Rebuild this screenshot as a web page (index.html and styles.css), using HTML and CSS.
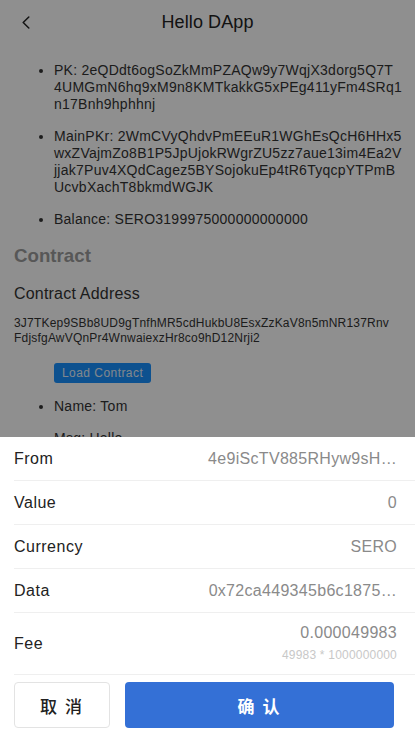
FILE: index.html
```html
<!DOCTYPE html>
<html lang="en">
<head>
<meta charset="utf-8">
<title>Hello DApp</title>
<link rel="stylesheet" href="styles.css">
</head>
<body>
<div class="page">
  <header class="topbar">
    <span class="back">
      <svg width="8" height="13" viewBox="0 0 8 13"><path d="M6.8 1 L1.2 6.5 L6.8 12" fill="none" stroke="#222" stroke-width="1.5" stroke-linecap="round" stroke-linejoin="round"/></svg>
    </span>
    <h1 class="title">Hello DApp</h1>
    <span class="spacer"></span>
  </header>
  <main class="content">
    <ul class="info">
      <li>PK: 2eQDdt6ogSoZkMmPZAQw9y7WqjX3dorg5Q7T<br>4UMGmN6hq9xM9n8KMTkakkG5xPEg411yFm4SRq1<br>n17Bnh9hphhnj</li>
      <li>MainPKr: 2WmCVyQhdvPmEEuR1WGhEsQcH6HHx5<br>wxZVajmZo8B1P5JpUjokRWgrZU5zz7aue13im4Ea2V<br>jjak7Puv4XQdCagez5BYSojokuEp4tR6TyqcpYTPmB<br>UcvbXachT8bkmdWGJK</li>
      <li>Balance: SERO3199975000000000000</li>
    </ul>
    <h3 class="section">Contract</h3>
    <div class="field-label">Contract Address</div>
    <div class="address">3J7TKep9SBb8UD9gTnfhMR5cdHukbU8EsxZzKaV8n5mNR137Rnv<br>FdjsfgAwVQnPr4WnwaiexzHr8co9hD12Nrji2</div>
    <button class="load">Load Contract</button>
    <ul class="info details">
      <li>Name: Tom</li>
      <li>Msg: Hello</li>
    </ul>
  </main>
</div>

<div class="mask"></div>

<section class="sheet">
  <div class="row"><span class="label">From</span><span class="value">4e9iScTV885RHyw9sH…</span></div>
  <div class="row"><span class="label">Value</span><span class="value">0</span></div>
  <div class="row"><span class="label">Currency</span><span class="value">SERO</span></div>
  <div class="row"><span class="label">Data</span><span class="value">0x72ca449345b6c1875…</span></div>
  <div class="row fee"><span class="label">Fee</span><span class="fee-values"><span class="value">0.000049983</span><span class="sub">49983 * 1000000000</span></span></div>
  <div class="actions">
    <button class="btn cancel">取 消</button>
    <button class="btn confirm">确 认</button>
  </div>
</section>
</body>
</html>
```

FILE: styles.css
```css
* { box-sizing: border-box; }

html, body {
  margin: 0;
  padding: 0;
  background: #fff;
  font-family: "Liberation Sans", Arial, "Noto Sans CJK SC", sans-serif;
  color: #333;
}

.page { min-height: 736px; }

.topbar {
  height: 44px;
  display: grid;
  grid-template-columns: 44px 1fr 44px;
  align-items: center;
}

.back {
  display: flex;
  align-items: center;
  justify-content: flex-start;
  padding-left: 22px;
  padding-top: 1px;
}

.title {
  margin: 0;
  text-align: center;
  font-size: 18px;
  font-weight: 400;
  color: #222;
  letter-spacing: 0.1px;
}

.content { padding: 0 14px; }

.info {
  margin: 18px 0 0;
  padding-left: 40px;
  font-size: 14px;
  line-height: 17px;
  letter-spacing: 0.25px;
  color: #333;
}

.info li {
  margin-bottom: 15px;
  white-space: nowrap;
}
.info li:last-child { margin-bottom: 0; }

.section {
  margin: 17px 0 0;
  font-size: 18.72px;
  line-height: 22px;
  font-weight: 700;
  color: #9c9c9c;
}

.field-label {
  margin-top: 17px;
  font-size: 16px;
  line-height: 20px;
  letter-spacing: 0.2px;
  color: #333;
}

.address {
  margin-top: 12px;
  font-size: 12px;
  line-height: 15px;
  letter-spacing: 0.2px;
  color: #333;
  white-space: nowrap;
}

.load {
  display: block;
  margin: 17px 0 0 40px;
  height: 20px;
  padding: 0 8px;
  border: 0;
  border-radius: 3px;
  background: #1890ff;
  color: #e6f0fb;
  font-family: inherit;
  font-size: 12px;
  letter-spacing: 0.45px;
}

.details { margin-top: 15px; }

.mask {
  position: fixed;
  inset: 0;
  background: rgba(0, 0, 0, 0.44);
}

.sheet {
  position: fixed;
  left: 0;
  right: 0;
  bottom: 0;
  height: 299px;
  background: #fff;
  display: flex;
  flex-direction: column;
}

.row {
  margin-left: 14px;
  padding-right: 18px;
  height: 44px;
  border-bottom: 1px solid #efefef;
  display: flex;
  align-items: center;
  justify-content: space-between;
}

.label {
  font-size: 16px;
  letter-spacing: 0.5px;
  color: #222;
}

.value {
  font-size: 16px;
  letter-spacing: 0.3px;
  color: #8a8a8a;
}

.row.fee { height: 62px; }

.fee-values {
  display: flex;
  flex-direction: column;
  align-items: flex-end;
  gap: 5px;
  padding-bottom: 1px;
}

.fee-values .value { line-height: 20px; letter-spacing: 0.3px; }

.sub {
  font-size: 12px;
  line-height: 15px;
  letter-spacing: 0.2px;
  color: #c8c8c8;
}

.actions {
  display: flex;
  gap: 15px;
  padding: 7px 21px 8px 14px;
}

.btn {
  height: 46px;
  border-radius: 4px;
  font-family: "Noto Sans CJK SC", sans-serif;
  font-size: 17px;
  font-weight: 500;
  letter-spacing: 2px;
}

.cancel {
  width: 96px;
  background: #fff;
  border: 1px solid #e3e3e3;
  color: #222;
}

.confirm {
  flex: 1;
  background: #3470d6;
  border: 0;
  color: #fff;
  font-weight: 700;
}
```
